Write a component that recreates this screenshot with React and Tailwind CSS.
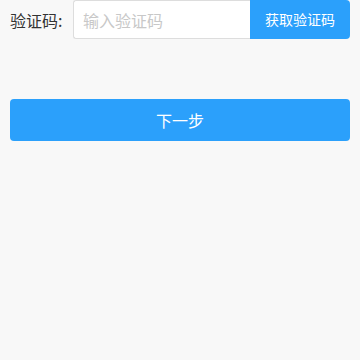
import React from 'react';

const App = () => {
    return (
        <div className="min-h-[360px] w-[360px] bg-[#f8f8f8] px-[10px]" style={{ fontFamily: '"Noto Sans CJK SC", "Noto Sans", sans-serif' }}>
            {/* Code row */}
            <div className="flex items-center h-[39px]">
                <label className="w-[63px] shrink-0 whitespace-nowrap text-[16px] text-[#333] leading-none">验证码:</label>
                <div className="flex flex-1 min-w-0 h-[39px]">
                    <input
                        type="text"
                        placeholder="输入验证码"
                        className="flex-1 w-0 min-w-0 h-full bg-white border border-[#ddd] border-r-0 rounded-l-[3px] pl-[9px] text-[16px] text-[#333] placeholder:text-[#c8c8c8] outline-none"
                    />
                    <button className="w-[100px] shrink-0 h-full bg-[#2ba0fb] text-white text-[14px] rounded-r-[4px]">
                        获取验证码
                    </button>
                </div>
            </div>

            {/* Next */}
            <button className="mt-[60px] w-full h-[42px] bg-[#2ba0fb] text-white text-[16px] rounded-[4px]">
                下一步
            </button>
        </div>
    );
};

export default App;
